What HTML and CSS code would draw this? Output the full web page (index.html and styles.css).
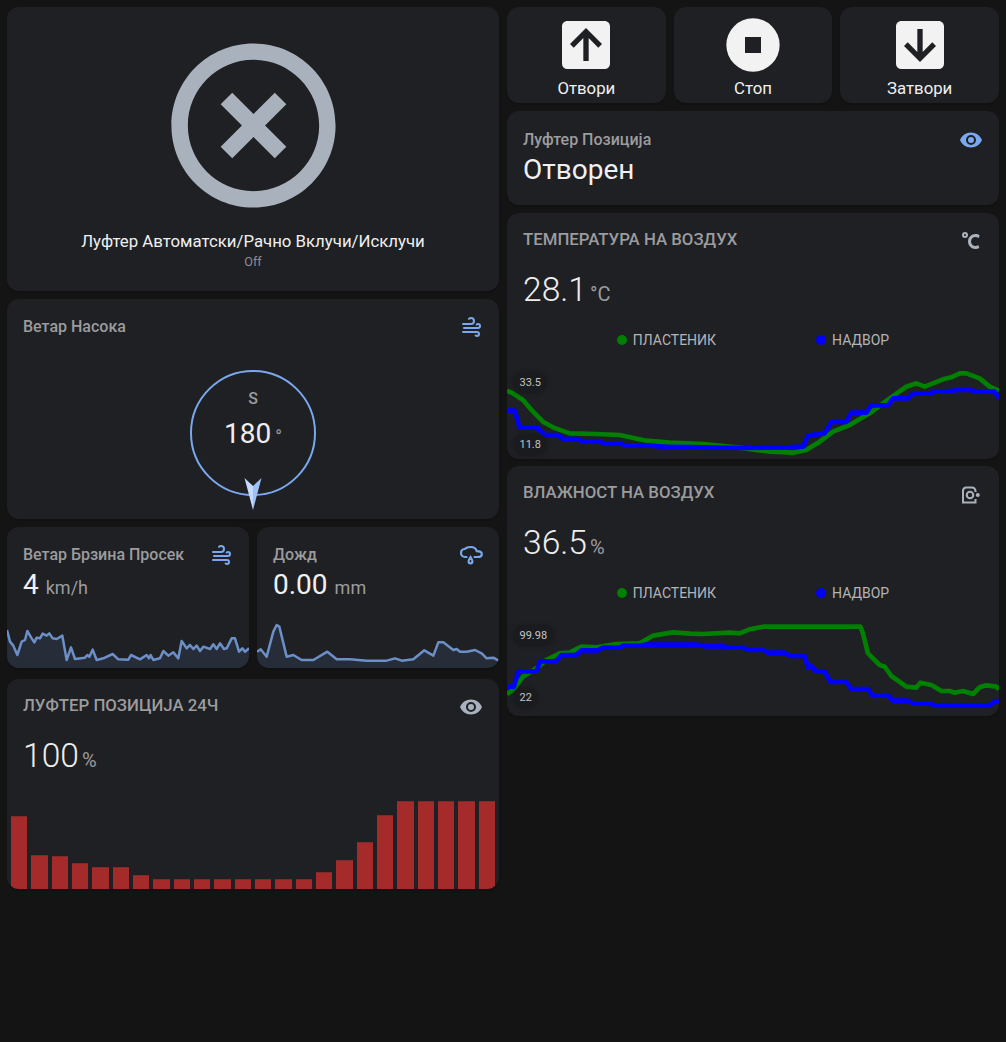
FILE: index.html
```html
<!DOCTYPE html>
<html lang="mk">
<head>
    <meta charset="UTF-8">
    <meta name="viewport" content="width=device-width, initial-scale=1.0">
    <title>Пластеник</title>
    <link rel="stylesheet" href="styles.css">
</head>
<body>
    <div class="dashboard">
        <div class="column">
            <div class="card toggle-card">
                <svg class="toggle-icon" viewBox="0 0 24 24"><path d="M12,20C7.59,20 4,16.41 4,12C4,7.59 7.59,4 12,4C16.41,4 20,7.59 20,12C20,16.41 16.41,20 12,20M12,2C6.47,2 2,6.47 2,12C2,17.53 6.47,22 12,22C17.53,22 22,17.53 22,12C22,6.47 17.53,2 12,2M14.59,8L12,10.59L9.41,8L8,9.41L10.59,12L8,14.59L9.41,16L12,13.41L14.59,16L16,14.59L13.41,12L16,9.41L14.59,8Z"/></svg>
                <div class="toggle-name">Луфтер Автоматски/Рачно Вклучи/Исклучи</div>
                <div class="toggle-state">Off</div>
            </div>

            <div class="card compass-card">
                <div class="card-head">
                    <span class="label">Ветар Насока</span>
                    <svg class="icon blue" viewBox="0 0 24 24"><path d="M4,10A1,1 0 0,1 3,9A1,1 0 0,1 4,8H12A2,2 0 0,0 14,6A2,2 0 0,0 12,4C11.45,4 10.95,4.22 10.59,4.59C10.2,5 9.56,5 9.17,4.59C8.78,4.2 8.78,3.56 9.17,3.17C9.9,2.45 10.9,2 12,2A4,4 0 0,1 16,6A4,4 0 0,1 12,10H4M19,12A1,1 0 0,0 20,11A1,1 0 0,0 19,10C18.72,10 18.47,10.11 18.29,10.29C17.9,10.68 17.27,10.68 16.88,10.29C16.5,9.9 16.5,9.27 16.88,8.88C17.42,8.34 18.17,8 19,8A3,3 0 0,1 22,11A3,3 0 0,1 19,14H5A1,1 0 0,1 4,13A1,1 0 0,1 5,12H19M18,18H4A1,1 0 0,1 3,17A1,1 0 0,1 4,16H18A3,3 0 0,1 21,19A3,3 0 0,1 18,22C17.17,22 16.42,21.66 15.88,21.12C15.5,20.73 15.5,20.1 15.88,19.71C16.27,19.32 16.9,19.32 17.29,19.71C17.47,19.89 17.72,20 18,20A1,1 0 0,0 19,19A1,1 0 0,0 18,18Z"/></svg>
                </div>
                <div class="compass">
                    <div class="compass-dir">S</div>
                    <div class="compass-value">180<span class="compass-unit">°</span></div>
                    <svg class="needle" viewBox="0 0 20 32"><polygon class="needle-left" points="1.5,0 10,8 10,32"/><polygon class="needle-right" points="18.5,0 10,8 10,32"/></svg>
                </div>
            </div>

            <div class="sensor-row">
                <div class="card sensor-card">
                    <div class="sensor-text">
                        <div class="card-head">
                            <span class="label">Ветар Брзина Просек</span>
                            <svg class="icon blue" viewBox="0 0 24 24"><path d="M4,10A1,1 0 0,1 3,9A1,1 0 0,1 4,8H12A2,2 0 0,0 14,6A2,2 0 0,0 12,4C11.45,4 10.95,4.22 10.59,4.59C10.2,5 9.56,5 9.17,4.59C8.78,4.2 8.78,3.56 9.17,3.17C9.9,2.45 10.9,2 12,2A4,4 0 0,1 16,6A4,4 0 0,1 12,10H4M19,12A1,1 0 0,0 20,11A1,1 0 0,0 19,10C18.72,10 18.47,10.11 18.29,10.29C17.9,10.68 17.27,10.68 16.88,10.29C16.5,9.9 16.5,9.27 16.88,8.88C17.42,8.34 18.17,8 19,8A3,3 0 0,1 22,11A3,3 0 0,1 19,14H5A1,1 0 0,1 4,13A1,1 0 0,1 5,12H19M18,18H4A1,1 0 0,1 3,17A1,1 0 0,1 4,16H18A3,3 0 0,1 21,19A3,3 0 0,1 18,22C17.17,22 16.42,21.66 15.88,21.12C15.5,20.73 15.5,20.1 15.88,19.71C16.27,19.32 16.9,19.32 17.29,19.71C17.47,19.89 17.72,20 18,20A1,1 0 0,0 19,19A1,1 0 0,0 18,18Z"/></svg>
                        </div>
                        <div class="sensor-value">4<span class="sensor-unit">km/h</span></div>
                    </div>
                    <svg class="spark" viewBox="21 285 726 144" preserveAspectRatio="none">
                        <polygon class="spark-fill" points="21,315 30,350 40,362 52,390 65,350 75,345 82,318 95,340 103,352 110,338 120,340 128,326 140,332 148,325 158,340 170,342 187,332 200,405 213,367 225,402 255,398 262,390 268,395 278,374 290,405 310,400 338,387 355,403 385,404 393,390 420,403 440,390 447,400 452,390 460,405 480,400 490,378 505,392 520,382 535,400 545,348 560,370 570,360 580,372 590,362 600,378 610,365 630,372 640,358 650,372 660,355 672,372 680,370 695,340 705,340 717,380 727,370 735,380 747,370 747,429 21,429"/>
                        <polyline class="spark-line" points="21,315 30,350 40,362 52,390 65,350 75,345 82,318 95,340 103,352 110,338 120,340 128,326 140,332 148,325 158,340 170,342 187,332 200,405 213,367 225,402 255,398 262,390 268,395 278,374 290,405 310,400 338,387 355,403 385,404 393,390 420,403 440,390 447,400 452,390 460,405 480,400 490,378 505,392 520,382 535,400 545,348 560,370 570,360 580,372 590,362 600,378 610,365 630,372 640,358 650,372 660,355 672,372 680,370 695,340 705,340 717,380 727,370 735,380 747,370"/>
                    </svg>
                </div>
                <div class="card sensor-card">
                    <div class="sensor-text">
                        <div class="card-head">
                            <span class="label">Дожд</span>
                            <svg class="icon blue" viewBox="0 0 24 24"><path class="cloud-stroke" d="M7.5,14H6C3.8,14 2,12.2 2,10C2,7.9 3.6,6.2 5.7,6C6.9,4.8 9,4 11.5,4C14.7,4 17.2,6 17.8,8.2C20.6,8.2 22.8,9.4 22.8,11.2C22.8,13 21,14 18.5,14H15.5M11.5,14C10.3,15.8 9.6,17 9.6,18.4A1.9,1.9 0 0,0 13.4,18.4C13.4,17 12.7,15.8 11.5,14Z"/></svg>
                        </div>
                        <div class="sensor-value">0.00<span class="sensor-unit">mm</span></div>
                    </div>
                    <svg class="spark" viewBox="771 285 726 144" preserveAspectRatio="none">
                        <polygon class="spark-fill" points="771,380 782,373 800,395 820,320 830,300 838,305 860,395 880,390 905,405 940,405 982,380 1010,403 1050,403 1100,407 1160,407 1185,400 1205,407 1240,403 1273,376 1300,392 1315,352 1330,352 1360,375 1370,372 1380,380 1400,380 1425,375 1445,385 1460,400 1480,398 1497,408 1497,429 771,429"/>
                        <polyline class="spark-line" points="771,380 782,373 800,395 820,320 830,300 838,305 860,395 880,390 905,405 940,405 982,380 1010,403 1050,403 1100,407 1160,407 1185,400 1205,407 1240,403 1273,376 1300,392 1315,352 1330,352 1360,375 1370,372 1380,380 1400,380 1425,375 1445,385 1460,400 1480,398 1497,408"/>
                    </svg>
                </div>
            </div>

            <div class="card graph-card bars-card">
                <div class="graph-head">
                    <span class="graph-title">ЛУФТЕР ПОЗИЦИЈА 24Ч</span>
                    <svg class="icon grey" viewBox="0 0 24 24"><path d="M12,9A3,3 0 0,0 9,12A3,3 0 0,0 12,15A3,3 0 0,0 15,12A3,3 0 0,0 12,9M12,17A5,5 0 0,1 7,12A5,5 0 0,1 12,7A5,5 0 0,1 17,12A5,5 0 0,1 12,17M12,4.5C7,4.5 2.73,7.61 1,12C2.73,16.39 7,19.5 12,19.5C17,19.5 21.27,16.39 23,12C21.27,7.61 17,4.5 12,4.5Z"/></svg>
                </div>
                <div class="graph-value">100<span class="graph-unit">%</span></div>
                <div class="bars">
                    <div class="bar" style="height:72.7px"></div>
                    <div class="bar" style="height:34.3px"></div>
                    <div class="bar" style="height:33.3px"></div>
                    <div class="bar" style="height:26px"></div>
                    <div class="bar" style="height:21.7px"></div>
                    <div class="bar" style="height:21.7px"></div>
                    <div class="bar" style="height:14.3px"></div>
                    <div class="bar" style="height:10px"></div>
                    <div class="bar" style="height:10px"></div>
                    <div class="bar" style="height:10px"></div>
                    <div class="bar" style="height:10px"></div>
                    <div class="bar" style="height:10px"></div>
                    <div class="bar" style="height:10px"></div>
                    <div class="bar" style="height:10px"></div>
                    <div class="bar" style="height:10px"></div>
                    <div class="bar" style="height:17px"></div>
                    <div class="bar" style="height:29.3px"></div>
                    <div class="bar" style="height:47px"></div>
                    <div class="bar" style="height:74.3px"></div>
                    <div class="bar" style="height:88.3px"></div>
                    <div class="bar" style="height:88.3px"></div>
                    <div class="bar" style="height:88.3px"></div>
                    <div class="bar" style="height:88.3px"></div>
                    <div class="bar" style="height:88.3px"></div>
                </div>
            </div>
        </div>

        <div class="column">
            <div class="button-row">
                <div class="card action-card">
                    <svg class="action-icon" viewBox="0 0 24 24"><path fill-rule="evenodd" d="M19,3H5C3.89,3 3,3.89 3,5V19A2,2 0 0,0 5,21H19A2,2 0 0,0 21,19V5C21,3.89 20.1,3 19,3ZM11,18V9.4L7.4,13L6,11.6L12,5.6L18,11.6L16.6,13L13,9.4V18Z"/></svg>
                    <div class="action-name">Отвори</div>
                </div>
                <div class="card action-card">
                    <svg class="action-icon" viewBox="0 0 24 24"><path fill-rule="evenodd" d="M12,2A10,10 0 0,0 2,12A10,10 0 0,0 12,22A10,10 0 0,0 22,12A10,10 0 0,0 12,2ZM9,9H15V15H9Z"/></svg>
                    <div class="action-name">Стоп</div>
                </div>
                <div class="card action-card">
                    <svg class="action-icon" viewBox="0 0 24 24"><path fill-rule="evenodd" d="M19,3H5C3.89,3 3,3.89 3,5V19A2,2 0 0,0 5,21H19A2,2 0 0,0 21,19V5C21,3.89 20.1,3 19,3ZM11,6V14.6L7.4,11L6,12.4L12,18.4L18,12.4L16.6,11L13,14.6V6Z"/></svg>
                    <div class="action-name">Затвори</div>
                </div>
            </div>

            <div class="card state-card">
                <div class="card-head">
                    <span class="label">Луфтер Позиција</span>
                    <svg class="icon blue" viewBox="0 0 24 24"><path d="M12,9A3,3 0 0,0 9,12A3,3 0 0,0 12,15A3,3 0 0,0 15,12A3,3 0 0,0 12,9M12,17A5,5 0 0,1 7,12A5,5 0 0,1 12,7A5,5 0 0,1 17,12A5,5 0 0,1 12,17M12,4.5C7,4.5 2.73,7.61 1,12C2.73,16.39 7,19.5 12,19.5C17,19.5 21.27,16.39 23,12C21.27,7.61 17,4.5 12,4.5Z"/></svg>
                </div>
                <div class="state-value">Отворен</div>
            </div>

            <div class="card graph-card temp-card">
                <div class="graph-head">
                    <span class="graph-title">ТЕМПЕРАТУРА НА ВОЗДУХ</span>
                    <svg class="icon grey" viewBox="0 0 24 24"><path d="M16.5,5C18.05,5 19.5,5.47 20.69,6.28L19.53,9.17C18.73,8.44 17.67,8 16.5,8C14,8 12,10 12,12.5C12,15 14,17 16.5,17C17.53,17 18.47,16.66 19.23,16.08L20.37,18.93C19.24,19.61 17.92,20 16.5,20C12.36,20 9,16.64 9,12.5C9,8.36 12.36,5 16.5,5M6,3A3,3 0 0,1 9,6A3,3 0 0,1 6,9A3,3 0 0,1 3,6A3,3 0 0,1 6,3M6,5A1,1 0 0,0 5,6A1,1 0 0,0 6,7A1,1 0 0,0 7,6A1,1 0 0,0 6,5Z"/></svg>
                </div>
                <div class="graph-value">28.1<span class="graph-unit">°C</span></div>
                <div class="legend">
                    <span class="legend-item"><i class="dot green"></i>ПЛАСТЕНИК</span>
                    <span class="legend-item"><i class="dot navy"></i>НАДВОР</span>
                </div>
                <div class="line-chart">
                    <svg viewBox="12 90 1476 327">
                        <polyline class="line-green" points="12,212 30,220 60,240 90,275 120,305 150,322 200,340 280,342 350,345 430,362 500,368 600,372 700,382 800,395 870,398 910,390 950,365 990,335 1040,315 1100,280 1160,235 1210,200 1240,190 1265,200 1320,178 1345,172 1370,160 1390,160 1430,175 1460,200 1488,212"/>
                        <polyline class="line-blue" points="12,272 35,272 50,322 100,322 125,345 165,345 180,357 225,357 240,365 290,365 305,371 355,371 365,376 430,376 480,380 600,382 720,384 850,382 900,380 915,347 965,340 985,306 1030,306 1045,278 1090,278 1105,256 1155,256 1170,235 1215,235 1230,221 1280,221 1295,214 1340,214 1360,210 1400,210 1420,215 1475,215 1488,235"/>
                    </svg>
                    <span class="tick tick-max">33.5</span>
                    <span class="tick tick-min">11.8</span>
                </div>
            </div>

            <div class="card graph-card hum-card">
                <div class="graph-head">
                    <span class="graph-title">ВЛАЖНОСТ НА ВОЗДУХ</span>
                    <svg class="icon grey" viewBox="0 0 24 24"><path fill-rule="evenodd" d="M7,4.5H13C15.5,4.5 17.5,6.5 17.5,9V10H15.5V9C15.5,7.6 14.4,6.5 13,6.5H7.5C6.1,6.5 5,7.6 5,9V19.5H15.5V17H17.5V21.5H3V8.5C3,6.3 4.8,4.5 7,4.5ZM11,8.7A4.3,4.3 0 1,1 11,17.3A4.3,4.3 0 1,1 11,8.7ZM11,10.8A2.2,2.2 0 1,0 11,15.2A2.2,2.2 0 1,0 11,10.8ZM18.8,11A2,2 0 1,1 18.8,15A2,2 0 1,1 18.8,11Z"/></svg>
                </div>
                <div class="graph-value">36.5<span class="graph-unit">%</span></div>
                <div class="legend">
                    <span class="legend-item"><i class="dot green"></i>ПЛАСТЕНИК</span>
                    <span class="legend-item"><i class="dot navy"></i>НАДВОР</span>
                </div>
                <div class="line-chart">
                    <svg viewBox="12 405 1476 333">
                        <polyline class="line-green" points="12,672 30,660 60,620 100,595 130,570 170,550 200,548 235,530 280,532 340,522 410,520 450,497 510,487 560,491 600,492 680,488 710,490 740,478 780,470 1072,470 1080,490 1095,550 1130,585 1145,590 1165,618 1210,650 1240,653 1252,638 1285,645 1315,663 1340,663 1355,668 1380,663 1410,672 1430,652 1450,646 1480,650 1488,658"/>
                        <polyline class="line-blue" points="12,650 32,650 48,604 100,604 112,574 160,574 175,555 220,555 235,541 285,541 300,533 350,533 360,527 410,527 430,524 580,524 610,529 660,529 670,532 720,532 735,540 780,540 795,548 845,548 860,558 905,558 915,593 925,588 940,605 965,605 982,636 1030,636 1045,657 1095,657 1108,676 1155,676 1170,692 1215,692 1230,700 1280,700 1295,706 1460,706 1475,695 1488,693"/>
                    </svg>
                    <span class="tick tick-max hum-max">99.98</span>
                    <span class="tick tick-min hum-min">22</span>
                </div>
            </div>
        </div>
    </div>
</body>
</html>
```

FILE: styles.css
```css
* {
    box-sizing: border-box;
}
body {
    margin: 0;
    height: 1042px;
    overflow: hidden;
    background-color: #141414;
    color: #e1e1e1;
    font-family: 'Roboto', 'Liberation Sans', sans-serif;
}
svg {
    display: block;
    fill: currentColor;
}
.dashboard {
    display: grid;
    grid-template-columns: 492px 492px;
    gap: 8px;
    padding: 7px;
}
.column {
    display: flex;
    flex-direction: column;
    gap: 8px;
}
.card {
    background-color: #1f2024;
    border-radius: 12px;
    box-shadow: 0 2px 2px rgba(0, 0, 0, 0.14);
    overflow: hidden;
}
.card-head, .graph-head {
    display: flex;
    justify-content: space-between;
}
.label {
    font-size: 16px;
    font-weight: 500;
    line-height: 24px;
    color: #9b9c9e;
}
.icon {
    width: 24px;
    height: 24px;
    flex: none;
}
.blue {
    color: #7aa8ee;
}
.grey {
    color: #a9b1bc;
}

/* toggle */
.toggle-card {
    height: 284px;
    display: flex;
    flex-direction: column;
    align-items: center;
}
.toggle-icon {
    width: 197px;
    height: 197px;
    margin-top: 20px;
    color: #a9b1bc;
}
.toggle-name {
    margin-top: 7px;
    font-size: 16.8px;
    line-height: 20px;
    color: #f0f0f0;
}
.toggle-state {
    margin-top: 3px;
    font-size: 12.6px;
    line-height: 16px;
    color: #8e8e90;
}

/* compass */
.compass-card {
    height: 220px;
    padding: 16px;
}
.compass {
    position: relative;
    width: 126px;
    height: 126px;
    margin: 31px auto 0;
    border: 2px solid #7aa8ee;
    border-radius: 50%;
    text-align: center;
}
.compass-dir {
    margin-top: 17px;
    font-size: 16px;
    font-weight: 500;
    line-height: 20px;
    color: #9b9c9e;
}
.compass-value {
    margin-top: 7px;
    font-size: 28px;
    line-height: 36px;
    color: #eeeeee;
}
.compass-unit {
    margin-left: 4px;
    font-size: 18px;
    line-height: 1;
    color: #9b9c9e;
}
.needle {
    position: absolute;
    left: 51px;
    top: 106px;
    width: 20px;
    height: 32px;
}
.needle-left {
    fill: #c4dbff;
}
.needle-right {
    fill: #9cc1fa;
}

/* small sensors */
.sensor-row {
    display: grid;
    grid-template-columns: 242px 242px;
    gap: 8px;
    margin-bottom: 3px;
}
.sensor-card {
    height: 141px;
    display: flex;
    flex-direction: column;
    justify-content: space-between;
}
.sensor-text {
    padding: 16px 16px 0;
}
.sensor-value {
    font-size: 28px;
    line-height: 36px;
    color: #f0f0f0;
}
.sensor-unit {
    margin-left: 7px;
    font-size: 18px;
    line-height: 1;
    color: #9b9c9e;
}
.cloud-stroke {
    fill: none;
    stroke: currentColor;
    stroke-width: 2.2;
    stroke-linecap: round;
}
.spark {
    width: 242px;
    height: 48px;
}
.spark-fill {
    fill: rgba(122, 168, 238, 0.1);
}
.spark-line {
    fill: none;
    stroke: #6b8fc6;
    stroke-width: 7.5;
    stroke-linejoin: round;
}

/* graph cards */
.graph-card {
    display: flex;
    flex-direction: column;
    padding-top: 16px;
}
.graph-head {
    padding: 0 16px;
}
.graph-title {
    font-size: 16.8px;
    font-weight: 500;
    line-height: 20px;
    color: #9b9c9e;
}
.graph-value {
    margin-top: 15px;
    padding-left: 16px;
    font-size: 33.6px;
    font-weight: 300;
    line-height: 44px;
    color: #eeeeee;
}
.graph-unit {
    margin-left: 3px;
    font-size: 20px;
    font-weight: 400;
    line-height: 1;
    color: #9b9c9e;
}
.temp-card {
    height: 246px;
}
.hum-card {
    height: 250px;
    margin-top: -1px;
}
.bars-card {
    height: 210px;
}
.legend {
    display: flex;
    justify-content: center;
    gap: 100px;
    margin-top: 18px;
    font-size: 14px;
    line-height: 20px;
    color: #b4b4b6;
}
.legend-item {
    display: flex;
    align-items: center;
}
.dot {
    width: 10px;
    height: 10px;
    margin-right: 6px;
    border-radius: 50%;
}
.dot.green {
    background-color: #008000;
}
.dot.navy {
    background-color: #0000ff;
}
.line-chart {
    position: relative;
    margin-top: auto;
}
.line-chart svg {
    width: 492px;
}
.line-chart polyline {
    fill: none;
    stroke-width: 14;
    stroke-linejoin: round;
}
.line-green {
    stroke: #008000;
}
.line-blue {
    stroke: #0000ff;
}
.tick {
    position: absolute;
    left: 6px;
    padding: 4px 6.5px;
    border-radius: 12px;
    background-color: #1a1b1e;
    box-shadow: 0 0 4px #1a1b1e;
    font-size: 11px;
    line-height: 13px;
    color: #c4c4c4;
}
.tick-max {
    top: 22px;
}
.tick-min {
    top: 84px;
}
.hum-max {
    top: 20px;
}
.hum-min {
    top: 82px;
}
.bars {
    display: flex;
    align-items: flex-end;
    gap: 4px;
    margin-top: auto;
    padding: 0 4px;
}
.bar {
    flex: 1;
    background-color: #a52a2a;
    border-top: 1px solid #7f2b2e;
}

/* right column */
.button-row {
    display: grid;
    grid-template-columns: repeat(3, 1fr);
    gap: 8px;
}
.action-card {
    height: 96px;
    display: flex;
    flex-direction: column;
    align-items: center;
}
.action-icon {
    width: 64px;
    height: 64px;
    margin-top: 6px;
    color: #f2f2f2;
}
.action-name {
    margin-top: 1px;
    font-size: 16.8px;
    line-height: 20px;
    color: #f0f0f0;
}
.state-card {
    height: 94px;
    padding: 17px 16px 16px;
}
.state-value {
    font-size: 28px;
    line-height: 36px;
    color: #f0f0f0;
}
```
